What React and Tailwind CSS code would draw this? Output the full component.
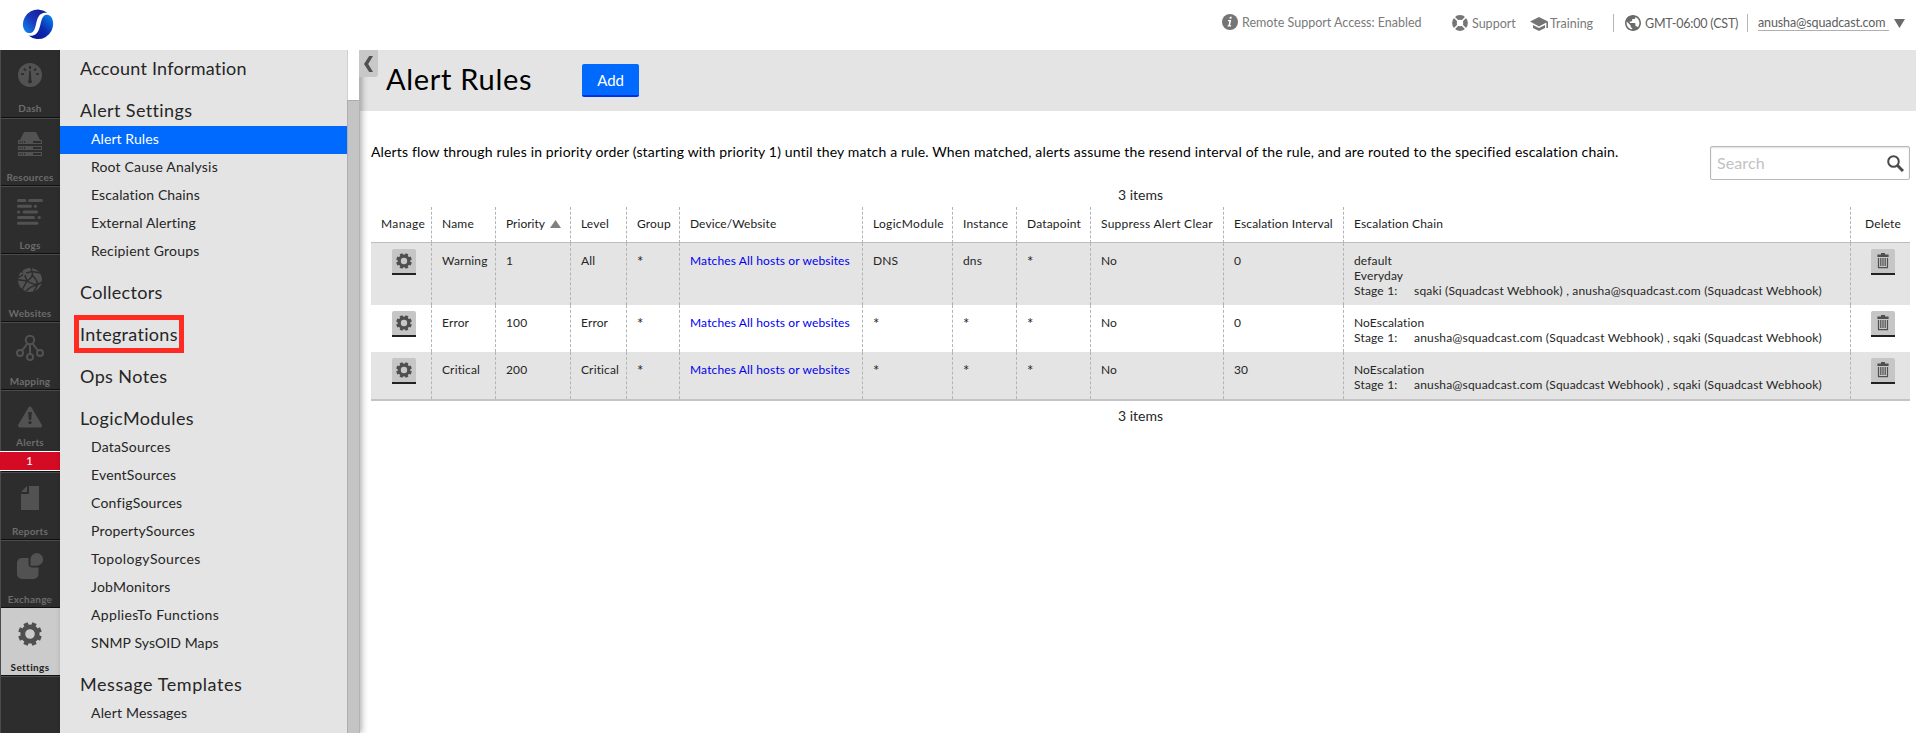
const Gear = ({ className }) => (
  <svg viewBox="0 0 24 24" className={className} fill="none" stroke="currentColor">
    <circle cx="12" cy="12" r="7.2" strokeWidth="4.8" />
    {[22.5, 67.5, 112.5, 157.5].map((a) => (
      <g key={a} transform={`rotate(${a} 12 12)`}>
        <path d="M12 0.2v4M12 19.8v4" strokeWidth="4.6" />
      </g>
    ))}
  </svg>
);

const Trash = () => (
  <svg viewBox="0 0 12 16" className="h-4 w-3" fill="#4f4f4f">
    <path d="M4 0h4v1.5h3.6V4H.4V1.5H4z" />
    <path d="M1.5 5v9.5h9V5" fill="none" stroke="#4f4f4f" strokeWidth="1.2" />
    <path d="M3.2 5h1.2v8H3.2zM5.4 5h1.2v8H5.4zM7.6 5h1.2v8H7.6zM1 14h10v1.2H1z" />
  </svg>
);

const icons = {
  dash: (
    <svg viewBox="0 0 24 24" className="size-6">
      <circle cx="12" cy="12" r="12" fill="#525252" />
      <g fill="#2d2d2d">
        <path d="M11 3h2v3h-2zM3 10.2h3v1.8H3zM18 10.2h3v1.8h-3z" />
        <path d="M5.2 6.3l1.3-1.3 2 2-1.3 1.3zM18.8 6.3L17.5 5l-2 2 1.3 1.3z" />
        <path d="M11.3 7.5h1.4l.6 9.4a2 2 0 1 1-2.6 0z" />
      </g>
    </svg>
  ),
  resources: (
    <svg viewBox="0 0 24 24" className="size-6" fill="#525252">
      <path d="M6 0h12l4 8H2z" />
      <path d="M0 8h24v4H0zM0 14h24v4H0zM0 20h24v4H0z" />
      <g fill="#2d2d2d">
        {[9, 15, 21].map((y) => (
          <path key={y} d={`M1.5 ${y}h1v2h-1zM3.8 ${y}h1v2h-1zM6.1 ${y}h1v2h-1zM15 ${y}h8v2h-8z`} />
        ))}
      </g>
    </svg>
  ),
  logs: (
    <svg viewBox="0 0 26 26" className="size-[26px]" stroke="#525252" strokeWidth="3" strokeLinecap="round">
      <path d="M1.5 1.5H8M12.5 1.5h12M1.5 7.2h12M18.3 7.2h.2M1.5 12.9h.2M7 12.9h12.500M1.5 18.600h15M22 18.600h.4M1.5 24.300h18.500" />
    </svg>
  ),
  websites: (
    <svg viewBox="0 0 24 24" className="size-6">
      <circle cx="12" cy="12" r="12" fill="#525252" />
      <g stroke="#2d2d2d" strokeWidth="1.5" fill="none">
        <path d="M6.500 5.500L14 3.500L23 5M14 3.500L13 0M6.500 5.500L0 10M6.500 5.500L3 3M6.500 5.500Q7.500 10 9 13L4 22M9 13Q16 8.500 14 3.500M9 13L-1 11.500M9 13Q13 16 20 16.500L24 14M14 7Q18.500 11 20 16.500L15.500 24M20 16.500Q13 18 8 23" />
      </g>
      <circle cx="6.500" cy="5.500" r="1.800" fill="#525252" />
    </svg>
  ),
  mapping: (
    <svg viewBox="0 0 28 26" className="h-[26px] w-7" fill="none" stroke="#525252" strokeWidth="2">
      <circle cx="14" cy="5" r="4.200" />
      <circle cx="4" cy="18" r="3" />
      <circle cx="14" cy="22" r="3" />
      <circle cx="24" cy="18" r="3" />
      <path d="M14 9v10M11.500 8.500L6 15.700M16.500 8.500l5.500 7.200" />
    </svg>
  ),
  alerts: (
    <svg viewBox="0 0 24 22" className="h-[22px] w-6">
      <path d="M12 2.400L22.200 19.700H1.800z" fill="#525252" stroke="#525252" strokeWidth="3.600" strokeLinejoin="round" />
      <path d="M10.200 6h3.600l-.6 8h-2.400z" fill="#2d2d2d" />
      <circle cx="12" cy="16.600" r="1.700" fill="#2d2d2d" />
    </svg>
  ),
  reports: (
    <svg viewBox="0 0 18 24" className="h-6 w-[18px]" fill="#525252">
      <path d="M8 0h10v24H0V8h8zM6 0v6H0z" />
    </svg>
  ),
  exchange: (
    <svg viewBox="0 0 26 26" className="size-[26px]" fill="#525252">
      <path d="M5 5h6.500v5.500a4 4 0 0 0 4 4H21.500V21a5 5 0 0 1-5 5H5a5 5 0 0 1-5-5V10a5 5 0 0 1 5-5z" />
      <path d="M13.500 12.700V6.400a6.300 6.300 0 1 1 6.300 6.300z" />
    </svg>
  ),
  settings: <Gear className="size-6 text-[#4f4f4f]" />,
};

function RailItem({ icon, label, tracking = 'tracking-[0.2px]', first, active }) {
  return (
    <div
      className={`flex h-[68px] flex-col items-center border-b border-b-[#101010] pr-px ${
        first ? '' : active ? 'border-t border-t-[#cbcbcb]' : 'border-t border-t-[#4b4b4b]'
      } ${active ? 'bg-[#cbcbcb] text-[#1c1c1c]' : 'text-[#6c6c6c]'}`}
    >
      <div className="flex h-[50px] items-center justify-center">{icons[icon]}</div>
      <div className={`mt-[2px] text-[10px] leading-3 font-bold ${tracking}`}>{label}</div>
    </div>
  );
}

function Rail() {
  return (
    <nav className="w-[60px] shrink-0 border-l border-[#4b4b4b] bg-[#2d2d2d]">
      <RailItem icon="dash" label="Dash" first />
      <RailItem icon="resources" label="Resources" />
      <RailItem icon="logs" label="Logs" />
      <RailItem icon="websites" label="Websites" />
      <RailItem icon="mapping" label="Mapping" />
      <div className="flex h-[61px] flex-col items-center border-t border-[#4b4b4b] pr-px text-[#6c6c6c]">
        <div className="mt-[15px] h-[22px]">{icons.alerts}</div>
        <div className="mt-2 text-[10px] leading-3 font-bold tracking-[0.2px]">Alerts</div>
      </div>
      <div className="-ml-px h-5 border-y border-white bg-[#d50a25] pr-px text-center text-[12px] leading-[18px] text-white">1</div>
      <div className="h-px bg-[#101010]" />
      <RailItem icon="reports" label="Reports" />
      <RailItem icon="exchange" label="Exchange" tracking="tracking-[0.25px]" />
      <RailItem icon="settings" label="Settings" tracking="tracking-[0.35px]" active />
      <div className="h-px bg-[#4b4b4b]" />
    </nav>
  );
}

const menu = [
  { title: 'Account Information', tracking: 'tracking-[0.24px]', items: [] },
  {
    title: 'Alert Settings',
    tracking: 'tracking-[0.38px]',
    items: [
      ['Alert Rules', 'tracking-[0.08px]'],
      ['Root Cause Analysis', 'tracking-[0.18px]'],
      ['Escalation Chains', 'tracking-[0.12px]'],
      ['External Alerting', 'tracking-[0.14px]'],
      ['Recipient Groups', 'tracking-[0.2px]'],
    ],
  },
  { title: 'Collectors', tracking: 'tracking-[0.3px]', items: [] },
  { title: 'Integrations', tracking: 'tracking-[0.3px]', items: [], marked: true },
  { title: 'Ops Notes', tracking: 'tracking-[0.4px]', items: [] },
  {
    title: 'LogicModules',
    tracking: 'tracking-[0.4px]',
    items: [
      ['DataSources', 'tracking-[0.22px]'],
      ['EventSources', 'tracking-[0.18px]'],
      ['ConfigSources', 'tracking-[0.22px]'],
      ['PropertySources', 'tracking-[0.16px]'],
      ['TopologySources', 'tracking-[0.37px]'],
      ['JobMonitors', 'tracking-[0.22px]'],
      ['AppliesTo Functions', 'tracking-[0.34px]'],
      ['SNMP SysOID Maps', 'tracking-[0.1px]'],
    ],
  },
  { title: 'Message Templates', tracking: 'tracking-[0.56px]', items: [['Alert Messages', 'tracking-[0.18px]']] },
];

function SideMenu() {
  return (
    <aside className="z-10 flex w-[300px] shrink-0 border-r border-[#b3b3b3] bg-[#e4e4e4] shadow-[2px_0_6px_rgba(0,0,0,0.3)]">
      <div className="-mt-2 w-[287px] text-[#262626]">
        {menu.map((s) => (
          <section key={s.title}>
            <h2 className="relative h-[42px] pt-[15px] pl-5 text-[18px] leading-[22px] font-normal">
              <span className={s.tracking}>{s.title}</span>
              {s.marked && <span className="absolute top-[7px] left-[14px] h-[38px] w-[110px] border-5 border-[#ff2a22]" />}
            </h2>
            {s.items.map(([t, tr]) => (
              <div
                key={t}
                className={`h-7 pl-[31px] text-sm leading-[26px] ${tr} ${t === 'Alert Rules' ? 'bg-[#006aff] text-white' : ''}`}
              >
                {t}
              </div>
            ))}
          </section>
        ))}
      </div>
      <div className="flex flex-1 flex-col">
        <div className="h-[50px] border-l border-[#cfcfcf] bg-white" />
        <div className="flex-1 border-t border-l border-[#adadad] bg-[#c4c4c4]" />
      </div>
    </aside>
  );
}

const Sep = ({ className }) => <span className={`h-[18px] w-px bg-[#b5b5b5] ${className}`} />;

function TopBar() {
  return (
    <header className="flex h-[50px] shrink-0 justify-between bg-white text-[12.5px] text-[#7a7a7a]">
      <svg viewBox="0 0 32 32" className="mt-2 ml-[22px] size-8">
        <defs>
          <linearGradient id="a" x1="0" y1="1" x2="1" y2="0">
            <stop offset="0" stopColor="#0b8cf5" />
            <stop offset=".5" stopColor="#1b34b8" />
            <stop offset="1" stopColor="#12168a" />
          </linearGradient>
          <linearGradient id="b" x1="0" y1="1" x2="1" y2="0">
            <stop offset="0" stopColor="#10108a" />
            <stop offset=".5" stopColor="#0a2bb0" />
            <stop offset="1" stopColor="#0b8cf5" />
          </linearGradient>
        </defs>
        <path d="M25.500 5A15 15 0 0 0 1 18C2 24 5.500 25.500 8.500 25C15.500 24 12.500 10 19 6C21 4.700 23.500 4.600 25.500 5z" fill="url(#a)" />
        <path d="M6.500 27.500A15 15 0 0 0 31 14C30.500 8.500 27.500 6.500 24.500 6.700C17.500 7.500 20 21 14 26C12 27.700 9 28.200 6.500 27.500z" fill="url(#b)" />
      </svg>
      <div className="flex h-[50px] items-start pr-[11px] whitespace-nowrap">
        <svg viewBox="0 0 16 16" className="mt-[14px] size-4">
          <circle cx="8" cy="8" r="8" fill="#757575" />
          <path d="M7.800 2.700h2l-.4 2h-2zM6 6h3.200l-1.100 5.300h1.100l-.2 1.200H5.500l.2-1.200h.8l.8-4.100H5.800z" fill="#fff" />
        </svg>
        <span className="mt-[15px] ml-1 w-[210px] leading-4">Remote Support Access: Enabled</span>
        <svg viewBox="0 0 16 16" className="mt-[15px] mr-1 size-4">
          <circle cx="8" cy="8" r="5.400" fill="none" stroke="#757575" strokeWidth="5" />
          <path d="M1 1l14 14M15 1L1 15" stroke="#fff" strokeWidth="1.600" />
          <circle cx="8" cy="8" r="3.200" fill="#fff" />
        </svg>
        <span className="mt-4 w-[58px] leading-4">Support</span>
        <svg viewBox="0 0 18 14" className="mt-[17px] mr-[2px] h-[14px] w-[18px]" fill="#757575">
          <path d="M9 0l9 4.500V11h-1.600V5.600L9 9.400 0 4.600z" />
          <path d="M3 7.900l6 3.100 6-3.100V11l-6 3-6-3z" />
        </svg>
        <span className="mt-4 w-[63px] leading-4">Training</span>
        <Sep className="mt-[14px] mr-[11px]" />
        <svg viewBox="2 2 20 20" className="mt-[15px] mr-1 size-4" fill="#6a6a6a">
          <path d="M12 2C6.480 2 2 6.480 2 12s4.480 10 10 10 10-4.480 10-10S17.520 2 12 2zm-1 17.930c-3.950-.49-7-3.850-7-7.930 0-.62.08-1.210.21-1.790L9 15v1c0 1.100.9 2 2 2v1.930zm6.900-2.540c-.26-.81-1-1.390-1.900-1.390h-1v-3c0-.55-.45-1-1-1H8v-2h2c.55 0 1-.45 1-1V7h2c1.100 0 2-.9 2-2v-.41c2.930 1.190 5 4.060 5 7.410 0 2.080-.8 3.970-2.100 5.390z" />
        </svg>
        <span className="mt-4 w-[102px] leading-4 tracking-[-0.2px] text-[#606060]">GMT-06:00 (CST)</span>
        <Sep className="mt-[14px] mr-[10px]" />
        <span className="mt-[14px] h-[17px] w-[131px] border-b border-[#b0b0b0] leading-[17px] tracking-[-0.13px] text-[#606060]">anusha@squadcast.com</span>
        <svg viewBox="0 0 11 9" className="mt-[19px] ml-[5px] h-[9px] w-[11px]" fill="#6a6a6a">
          <path d="M0 0h11L5.500 9z" />
        </svg>
      </div>
    </header>
  );
}

const link = 'Matches All hosts or websites';
const rows = [
  ['Warning', '1', 'All', '*', link, 'DNS', 'dns', '*', 'No', '0', ['default', 'Everyday'], 'sqaki (Squadcast Webhook) , anusha@squadcast.com (Squadcast Webhook)'],
  ['Error', '100', 'Error', '*', link, '*', '*', '*', 'No', '0', ['NoEscalation'], 'anusha@squadcast.com (Squadcast Webhook) , sqaki (Squadcast Webhook)'],
  ['Critical', '200', 'Critical', '*', link, '*', '*', '*', 'No', '30', ['NoEscalation'], 'anusha@squadcast.com (Squadcast Webhook) , sqaki (Squadcast Webhook)'],
];
const heads = [
  ['Manage', 'tracking-[0.36px]'],
  ['Name', 'tracking-[0.2px]'],
  ['Priority', 'tracking-[0.02px]'],
  ['Level', 'tracking-[0.15px]'],
  ['Group', 'tracking-[0.15px]'],
  ['Device/Website', 'tracking-[0.08px]'],
  ['LogicModule', 'tracking-[0.3px]'],
  ['Instance', 'tracking-[0.15px]'],
  ['Datapoint', 'tracking-[0.17px]'],
  ['Suppress Alert Clear', 'tracking-[0.27px]'],
  ['Escalation Interval', 'tracking-[0.15px]'],
  ['Escalation Chain', 'tracking-[0.17px]'],
];
const cell = 'border-r border-dashed border-r-[#b4b4b4] p-0 pt-[10px] pl-[10px] align-top';
const square = 'mt-[6px] flex h-[26px] w-6 items-center justify-center rounded-t-[2px] border-b-2 border-[#222] bg-[#c6c6c6]';

function RulesTable() {
  return (
    <table className="w-[1539px] table-fixed border-separate border-spacing-0 border-b-2 border-[#c4c4c4] text-left text-xs leading-[15px] whitespace-nowrap text-[#262626]">
      <colgroup>
        <col className="w-[61px]" />
        <col className="w-[64px]" />
        <col className="w-[75px]" />
        <col className="w-[56px]" />
        <col className="w-[53px]" />
        <col className="w-[183px]" />
        <col className="w-[90px]" />
        <col className="w-[64px]" />
        <col className="w-[74px]" />
        <col className="w-[133px]" />
        <col className="w-[120px]" />
        <col className="w-[507px]" />
        <col className="w-[59px]" />
      </colgroup>
      <thead>
        <tr className="h-9">
          {heads.map(([h, tr]) => (
            <th key={h} className={`border-r border-b border-r-[#b4b4b4] border-b-[#bdbdbd] [border-right-style:dashed] p-0 pt-[9px] pl-[10px] align-top font-normal text-[#1c1c1c] ${tr}`}>
              {h}
              {h === 'Priority' && (
                <svg viewBox="0 0 11 8" className="ml-[5px] inline-block h-2 w-[11px] align-baseline" fill="#808080">
                  <path d="M5.500 0L11 8H0z" />
                </svg>
              )}
            </th>
          ))}
          <th className="border-b border-[#bdbdbd] p-0 pt-[9px] pl-[14px] align-top font-normal tracking-[0.15px] text-[#1c1c1c]">Delete</th>
        </tr>
      </thead>
      <tbody>
        {rows.map((r, i) => (
          <tr key={r[0]} className={`${i === 0 ? 'h-[62px]' : 'h-[47px]'} ${i === 1 ? '' : 'bg-[#e4e4e4]'}`}>
            <td className="border-r border-dashed border-[#b4b4b4] p-0 pl-[21px] align-top">
              <div className={square}>
                <Gear className="size-4 text-[#4f4f4f]" />
              </div>
            </td>
            {r.slice(0, 10).map((c, j) => (
              <td key={j} className={`${cell} tracking-[0.14px] ${j === 4 ? 'text-[#0000ee]' : ''} ${c === '*' ? 'text-[15px] leading-[17px]' : ''}`}>
                {c}
              </td>
            ))}
            <td className={cell}>
              {r[10].map((n) => (
                <div key={n} className="tracking-[0.13px]">{n}</div>
              ))}
              <div className="flex">
                <span className="w-[60px] tracking-[0.18px]">Stage 1:</span>
                <span className="tracking-[0.187px]">{r[11]}</span>
              </div>
            </td>
            <td className="p-0 pl-5 align-top">
              <div className={square}>
                <Trash />
              </div>
            </td>
          </tr>
        ))}
      </tbody>
    </table>
  );
}

export default function App() {
  return (
    <div className="flex h-[733px] w-full flex-col overflow-hidden bg-white font-['Lato',sans-serif]">
      <TopBar />
      <div className="flex min-h-0 flex-1 overflow-hidden">
        <Rail />
        <SideMenu />
        <main className="min-w-0 flex-1">
          <div className="flex h-[61px] bg-[#e4e4e4]">
            <div className="relative z-20 -ml-px flex h-[27px] w-[19px] items-center justify-center rounded-br-[3px] bg-[#c8c8c8]">
              <svg viewBox="0 0 9 16" className="h-4 w-[9px]" fill="#505050">
                <path d="M5.200 0H9L4.200 8 9 16H5.200L0 8z" />
              </svg>
            </div>
            <h1 className="mt-[10px] ml-[8px] w-[196px] text-[29px] leading-[37px] font-normal tracking-[0.7px] whitespace-nowrap text-black">Alert Rules</h1>
            <button className="mt-[14px] h-[33px] w-[57px] rounded-[2px] border-b-2 border-[#0030e8] bg-[#006aff] text-[15px] leading-[30px] tracking-[-0.1px] text-white">
              Add
            </button>
          </div>
          <div className="pr-[6px] pl-[11px]">
            <div className="flex h-[73px] justify-between">
              <p className="mt-[31px] text-sm leading-5 tracking-[0.157px] whitespace-nowrap text-black">
                Alerts flow through rules in priority order (starting with priority 1) until they match a rule. When matched, alerts assume
                the resend interval of the rule, and are routed to the specified escalation chain.
              </p>
              <div className="mt-[35px] flex h-[34px] w-[200px] items-center justify-between rounded-[2px] border border-[#b8b8b8] pr-[5px] pl-[6px] shadow-[inset_0_1px_2px_rgba(0,0,0,0.12)]">
                <span className="text-base leading-5 tracking-[0.1px] text-[#c2c2c2]">Search</span>
                <svg viewBox="0 0 17 17" className="size-[17px]" fill="none" stroke="#4a4a4a">
                  <circle cx="6.500" cy="6.500" r="5.300" strokeWidth="2" />
                  <path d="M10.500 10.500l5.500 5.500" strokeWidth="3" />
                </svg>
              </div>
            </div>
            <div className="h-[23px] text-center text-sm leading-[22px] text-[#262626]">3 items</div>
            <RulesTable />
            <div className="mt-1 text-center text-sm leading-[22px] text-[#262626]">3 items</div>
          </div>
        </main>
      </div>
    </div>
  );
}
